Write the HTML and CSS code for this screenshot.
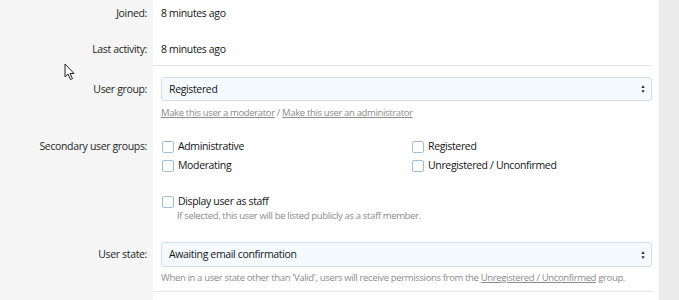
FILE: index.html
```html
<!DOCTYPE html>
<html lang="en">
<head>
    <meta charset="UTF-8">
    <meta name="viewport" content="width=device-width, initial-scale=1.0">
    <title>Edit user</title>
    <link rel="stylesheet" href="styles.css">
</head>
<body>
    <div class="page">
        <div class="form-block">
            <!-- Info rows -->
            <div class="form-row row-joined">
                <div class="form-label">Joined:</div>
                <div class="form-value">8 minutes ago</div>
            </div>
            <div class="form-row row-activity">
                <div class="form-label">Last activity:</div>
                <div class="form-value">8 minutes ago</div>
            </div>
            <div class="form-sep"></div>

            <!-- User group -->
            <div class="form-row row-group">
                <div class="form-label label-select">User group:</div>
                <div class="form-value">
                    <div class="select-box">
                        <span>Registered</span>
                        <span class="select-arrows">&#9650;<br>&#9660;</span>
                    </div>
                    <div class="form-hint">
                        <a href="#">Make this user a moderator</a> / <a href="#">Make this user an administrator</a>
                    </div>
                </div>
            </div>

            <!-- Secondary groups -->
            <div class="form-row row-secondary">
                <div class="form-label">Secondary user groups:</div>
                <div class="form-value">
                    <ul class="check-grid">
                        <li><span class="check"></span>Administrative</li>
                        <li><span class="check"></span>Registered</li>
                        <li><span class="check"></span>Moderating</li>
                        <li><span class="check"></span>Unregistered / Unconfirmed</li>
                    </ul>
                </div>
            </div>

            <div class="form-row row-staff">
                <div class="form-label"></div>
                <div class="form-value">
                    <div class="check-item"><span class="check"></span>Display user as staff</div>
                    <div class="form-hint hint-indent">If selected, this user will be listed publicly as a staff member.</div>
                </div>
            </div>

            <!-- User state -->
            <div class="form-row row-state">
                <div class="form-label label-select">User state:</div>
                <div class="form-value">
                    <div class="select-box">
                        <span>Awaiting email confirmation</span>
                        <span class="select-arrows">&#9650;<br>&#9660;</span>
                    </div>
                    <div class="form-hint">
                        When in a user state other than 'Valid', users will receive permissions from the <a href="#">Unregistered / Unconfirmed</a> group.
                    </div>
                </div>
            </div>
            <div class="form-sep"></div>
        </div>
        <div class="side-strip"></div>
    </div>

    <svg class="cursor" width="12" height="18" viewBox="0 0 12 18">
        <path d="M1 1 L1 14 L4 11 L6.5 16.5 L8.5 15.5 L6 10.5 L10 10.5 Z" fill="#fff" stroke="#222" stroke-width="1" stroke-linejoin="round"/>
    </svg>
</body>
</html>
```

FILE: styles.css
```css
body {
    margin: 0;
    padding: 0;
    font-family: "Open Sans", "Noto Sans", Arial, sans-serif;
    font-size: 10.5px;
    letter-spacing: -0.35px;
    color: #141414;
    background-color: #ececec;
    overflow: hidden;
}

.page {
    display: flex;
    height: 300px;
}

/* Form block: label column + white content column */
.form-block {
    width: 659px;
    background: linear-gradient(to right, #f5f5f5 153px, #fefefe 153px);
}

.side-strip {
    flex: 1;
    background-color: #ececec;
}

.form-row {
    display: grid;
    grid-template-columns: 153px 1fr;
    line-height: 17px;
}

.form-label {
    text-align: right;
    padding-right: 6px;
    color: #1e1e1e;
}

.form-value {
    padding-left: 8px;
    padding-right: 7px;
}

.form-sep {
    margin-left: 153px;
    margin-right: 7px;
    border-top: 1px solid #e4e4e4;
}

.row-joined {
    padding-top: 5px;
}

.row-activity {
    padding-top: 19px;
    padding-bottom: 7px;
}

.row-group {
    padding-top: 11px;
}

.label-select {
    padding-top: 4px;
}

/* Select box */
.select-box {
    display: flex;
    justify-content: space-between;
    align-items: center;
    height: 22px;
    padding: 0 6px 0 7px;
    border: 1px solid #d8dde3;
    border-radius: 3px;
    background-color: #f5faff;
    color: #141414;
}

.select-arrows {
    font-size: 5px;
    line-height: 5px;
    color: #222;
    text-align: center;
}

.form-hint {
    margin-top: 4px;
    font-size: 9.5px;
    line-height: 15px;
    color: #8c8c8c;
}

.form-hint a {
    color: #8c8c8c;
    text-decoration: underline;
}

/* Checkboxes */
.row-secondary {
    padding-top: 18px;
}

.check-grid {
    list-style: none;
    margin: 0;
    padding: 0;
    display: grid;
    grid-template-columns: 250px 1fr;
    row-gap: 2px;
}

.check-grid li,
.check-item {
    display: flex;
    align-items: center;
    height: 17px;
}

.check {
    width: 10px;
    height: 10px;
    border: 1px solid #9cc0dc;
    border-radius: 2px;
    background-color: #fff;
    margin: 0 4px 0 1px;
}

.row-staff {
    padding-top: 19px;
}

.hint-indent {
    margin-top: -2px;
    padding-left: 16px;
}

.row-state {
    padding-top: 19px;
}

.row-state .select-box {
    height: 23px;
}

.row-state .form-hint {
    margin-top: 3px;
    padding-bottom: 6px;
}

.cursor {
    position: absolute;
    left: 64px;
    top: 63px;
}
```
